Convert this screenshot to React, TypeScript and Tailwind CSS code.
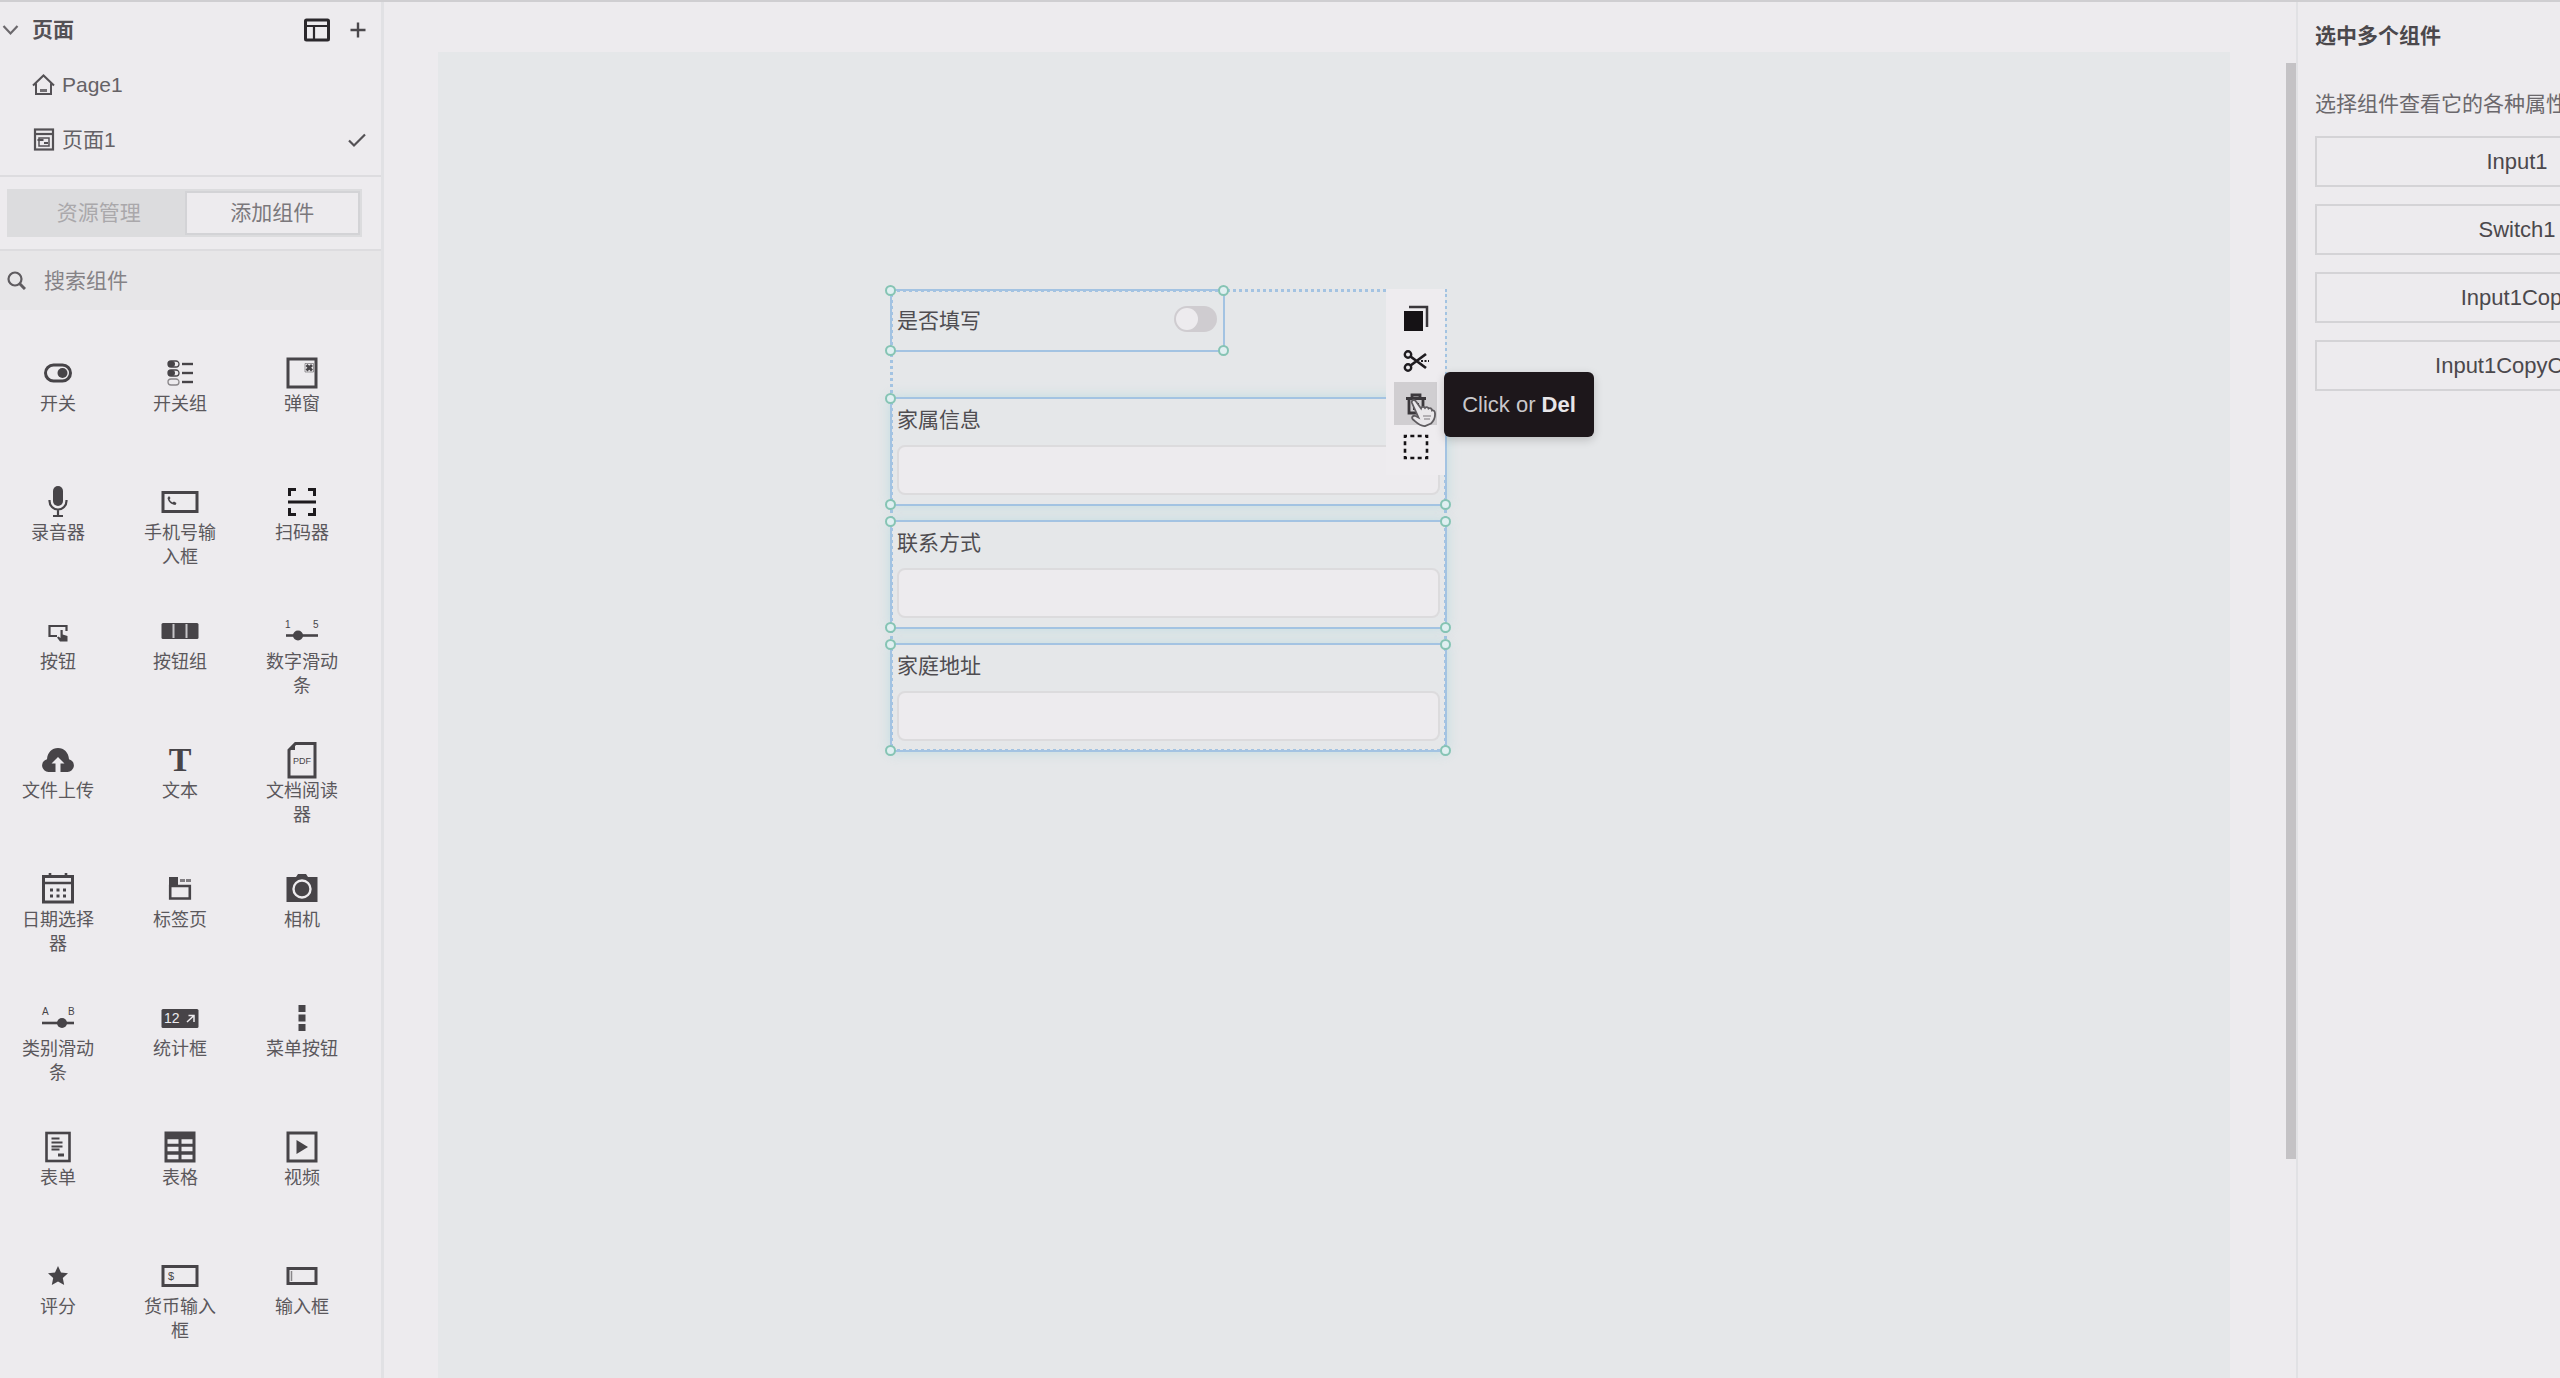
import React from 'react';

const Svg = ({ children }: { children: React.ReactNode }) => (
  <svg
    className="h-[38px] w-10 shrink-0 overflow-visible"
    viewBox="-20 -19 40 38"
    fill="none"
    stroke="#474448"
    strokeWidth="3"
    aria-hidden="true"
  >
    {children}
  </svg>
);

const ink = '#474448';
const light = '#edebee';
const font = 'Liberation Sans, sans-serif';

const icons: Record<string, React.ReactNode> = {
  switch: (
    <Svg>
      <rect x="-12.5" y="-8" width="25" height="16" rx="8" />
      <circle cx="4.5" cy="0" r="5" fill={ink} stroke="none" />
    </Svg>
  ),
  switchGroup: (
    <Svg>
      {[-9, 0, 9].map((y) => (
        <g key={y}>
          <rect x="-12" y={y - 3} width="11" height="6" rx="3" strokeWidth="1.3" opacity={y === 9 ? 0.6 : 1} />
          {y < 9 && <rect x="-12" y={y - 3} width="7" height="6" rx="3" fill={ink} stroke="none" />}
          <path d={`M2 ${y}h11`} strokeWidth="2.4" />
        </g>
      ))}
    </Svg>
  ),
  modal: (
    <Svg>
      <rect x="-14" y="-14" width="28" height="28" />
      <path d="M3 -9.500h8.500v8.500H3z" strokeWidth="1" opacity=".5" />
      <path d="M4.500 -8l5.500 5.500M10 -8l-5.500 5.500" strokeWidth="2.800" />
    </Svg>
  ),
  mic: (
    <Svg>
      <rect x="-5" y="-16" width="10" height="20" rx="5" fill={ink} stroke="none" />
      <path d="M-8.500 -2v1a8.500 8.500 0 0 0 17 0v-1M0 8v6M-5 14h10" strokeWidth="2.200" />
    </Svg>
  ),
  phone: (
    <Svg>
      <rect x="-17" y="-9.500" width="34" height="19" />
      <path d="M-12.500 -4c1 4.500 4 6.500 8 7l1-2-2.500-1.500-1.500 1c-1.500-.8-2.300-1.800-3-3l1-1.500-1.500-2z" fill={ink} stroke="none" />
    </Svg>
  ),
  scan: (
    <Svg>
      <path d="M-12.500 -6v-6.500h6.500M6 -12.500h6.500v6.500M12.500 6v6.500H6M-6 12.500h-6.500V6M-14 0h28" stroke="#1d1a1d" strokeWidth="3" />
    </Svg>
  ),
  button: (
    <Svg>
      <path d="M-1 5h-7.500v-10h17V0" strokeWidth="2.200" />
      <path d="M2 10.500l-3-4 1.500-1 2 1.500V-1h2.200v4.500l4.800 1.500v5.500z" fill={ink} stroke="none" />
    </Svg>
  ),
  buttonGroup: (
    <Svg>
      <rect x="-18.500" y="-8" width="37" height="16" rx="1.500" fill={ink} stroke="none" />
      <path d="M-6.500 -7v14M6.500 -7v14" stroke="#c6c4c7" strokeWidth="2" />
    </Svg>
  ),
  numberSlider: (
    <Svg>
      <path d="M-16 4.500h32" strokeWidth="2.600" />
      <circle cx="-4" cy="4.500" r="5" fill={ink} stroke="none" />
      <text x="-17" y="-3" fontSize="10" fill={ink} stroke="none" fontFamily={font}>1</text>
      <text x="11" y="-3" fontSize="10" fill={ink} stroke="none" fontFamily={font}>5</text>
    </Svg>
  ),
  upload: (
    <Svg>
      <path
        d="M-2.500 12H-9.500a6.500 6.500 0 0 1-1.500-12.800C-10.500 -7.500-6 -12 0 -12s10.500 4.500 11 11.200A6.500 6.500 0 0 1 9.500 12H2.500V3.500h4L0 -3l-6.500 6.500h4z"
        fill={ink}
        stroke="none"
      />
    </Svg>
  ),
  text: (
    <Svg>
      <text x="0" y="11" fontSize="34" fontWeight="700" textAnchor="middle" fill={ink} stroke="none" fontFamily="Liberation Serif, serif">
        T
      </text>
    </Svg>
  ),
  pdf: (
    <Svg>
      <path d="M-13 17v-27l6.500-6.500H13V17z" />
      <path d="M-13 -10h6v-6z" fill={ink} stroke="none" />
      <text x="0" y="4" fontSize="9" textAnchor="middle" fill={ink} stroke="none" fontFamily={font}>PDF</text>
    </Svg>
  ),
  calendar: (
    <Svg>
      <rect x="-14.500" y="-12.500" width="29" height="25.500" />
      <path d="M-14 -6h28M-8 -16v5M8 -16v5" strokeWidth="2.600" />
      <path d="M-8 1h16M-8 7h16" strokeWidth="3" strokeDasharray="3 3.500" />
    </Svg>
  ),
  tabs: (
    <Svg>
      <path d="M-9.800 -3h19.600v12.500h-19.600z" strokeWidth="2.600" />
      <path d="M-11 -12h9v8h-9z" fill={ink} stroke="none" />
      <path d="M0 -8.500h11" strokeWidth="3" opacity=".65" strokeDasharray="5 1" />
    </Svg>
  ),
  camera: (
    <Svg>
      <path d="M-15.500 -12h9.500l2-3h8l2 3h9.500v25h-31z" fill={ink} stroke="none" />
      <circle cx="0" cy="0" r="8.500" stroke={light} strokeWidth="2.400" />
    </Svg>
  ),
  categorySlider: (
    <Svg>
      <path d="M-16 5h32" strokeWidth="2.600" />
      <circle cx="4" cy="5" r="5" fill={ink} stroke="none" />
      <text x="-16" y="-3" fontSize="10" fill={ink} stroke="none" fontFamily={font}>A</text>
      <text x="10" y="-3" fontSize="10" fill={ink} stroke="none" fontFamily={font}>B</text>
    </Svg>
  ),
  stat: (
    <Svg>
      <rect x="-18.500" y="-9" width="37" height="19" rx="1.500" fill={ink} stroke="none" />
      <text x="-16" y="5" fontSize="14" fill={light} stroke="none" fontFamily={font}>12</text>
      <path d="M7 4l6.500-6M8.500 -2.500h5.500V4" stroke={light} strokeWidth="1.500" />
    </Svg>
  ),
  menu: (
    <Svg>
      <path d="M-3.500 -13h7v7h-7zM-3.500 -3.500h7v7h-7zM-3.500 6h7v7h-7z" fill={ink} stroke="none" />
    </Svg>
  ),
  form: (
    <Svg>
      <rect x="-11.500" y="-14" width="23" height="28" strokeWidth="2.600" />
      <path d="M-6.500 -8.500h8M-6.500 -4.500h11M-6.500 -.5h11M-6.500 2.500h8" strokeWidth="2" />
      <path d="M0 8h6" strokeWidth="3" />
    </Svg>
  ),
  table: (
    <Svg>
      <rect x="-15.500" y="-15.500" width="31" height="31" fill={ink} stroke="none" />
      <path d="M-12.500 -5.500h11M1.500 -5.500h11M-12.500 2h11M1.500 2h11M-12.500 10h11M1.500 10h11" stroke={light} strokeWidth="4.500" />
    </Svg>
  ),
  video: (
    <Svg>
      <rect x="-14" y="-14" width="28" height="28" />
      <path d="M-5.500 -7L6 0-5.500 7z" fill={ink} stroke="none" />
    </Svg>
  ),
  star: (
    <Svg>
      <path d="M0 -10l3 6.500 7 .8-5.200 4.800L6.200 9 0 5.500-6.200 9l1.400-6.900L-10 -2.700l7-.8z" fill={ink} stroke="none" />
    </Svg>
  ),
  currency: (
    <Svg>
      <rect x="-17" y="-9.500" width="34" height="19" />
      <text x="-12" y="4" fontSize="11" fill={ink} stroke="none" fontFamily={font}>$</text>
    </Svg>
  ),
  input: (
    <Svg>
      <rect x="-14" y="-7.500" width="28" height="15" />
      <path d="M-10.500 -5v10" strokeWidth="1.500" opacity=".6" />
    </Svg>
  ),
};

const components: [string, string][] = [
  ['switch', '开关'],
  ['switchGroup', '开关组'],
  ['modal', '弹窗'],
  ['mic', '录音器'],
  ['phone', '手机号输入框'],
  ['scan', '扫码器'],
  ['button', '按钮'],
  ['buttonGroup', '按钮组'],
  ['numberSlider', '数字滑动条'],
  ['upload', '文件上传'],
  ['text', '文本'],
  ['pdf', '文档阅读器'],
  ['calendar', '日期选择器'],
  ['tabs', '标签页'],
  ['camera', '相机'],
  ['categorySlider', '类别滑动条'],
  ['stat', '统计框'],
  ['menu', '菜单按钮'],
  ['form', '表单'],
  ['table', '表格'],
  ['video', '视频'],
  ['star', '评分'],
  ['currency', '货币输入框'],
  ['input', '输入框'],
];

function Sidebar() {
  return (
    <aside className="flex w-[384px] shrink-0 flex-col overflow-hidden border-r-3 border-[#e1e1e4]">
      <section className="flex flex-col border-b-2 border-[#dddcdf] pb-2">
        <div className="flex h-[55px] items-center pr-[15px]">
          <button className="flex items-center gap-[13px] font-bold text-[#545155]">
            <svg className="ml-[2px] h-4 w-[17px]" viewBox="0 0 17 16" fill="none" stroke="#6b686c" strokeWidth="2.2" aria-hidden="true">
              <path d="M1.500 4l7 7.500 7-7.500" />
            </svg>
            页面
          </button>
          <button aria-label="布局" className="ml-auto">
            <svg className="h-6 w-[26px]" viewBox="0 0 26 24" fill="none" stroke="#2b282c" strokeWidth="3" aria-hidden="true">
              <rect x="1.500" y="2" width="23" height="20" rx="1" />
              <path d="M2 8h22M10 8v14" strokeWidth="2.200" />
            </svg>
          </button>
          <button aria-label="新增页面" className="ml-[20px]">
            <svg className="h-4 w-4" viewBox="0 0 16 16" fill="none" stroke="#4b484c" strokeWidth="2.400" aria-hidden="true">
              <path d="M8 .5v15M.5 8h15" />
            </svg>
          </button>
        </div>
        <button className="flex h-[55px] items-center gap-[7px] pl-8">
          <svg className="h-[23px] w-[23px]" viewBox="0 0 23 23" fill="none" stroke="#545155" strokeWidth="2" aria-hidden="true">
            <path d="M1 12.500L11.500 2.500 22 12.500M4 10.500V21h15V10.500" />
            <path d="M8 17.500h7" strokeWidth="3" opacity=".8" />
          </svg>
          Page1
        </button>
        <button className="flex h-[55px] items-center gap-[7px] pr-[15px] pl-8">
          <svg className="h-[23px] w-[23px]" viewBox="0 0 23 23" fill="none" stroke="#545155" strokeWidth="2.200" aria-hidden="true">
            <rect x="3" y="1.500" width="18" height="20" />
            <path d="M3 6h18" />
            <rect x="7" y="10" width="10" height="8" strokeWidth="1.500" />
            <path d="M5.500 12h6M12 15h4" strokeWidth="2" />
          </svg>
          页面1
          <svg className="ml-auto h-4 w-[18px]" viewBox="0 0 18 16" fill="none" stroke="#545155" strokeWidth="2.200" aria-hidden="true">
            <path d="M1 8.500l5 5L17 2.500" />
          </svg>
        </button>
      </section>
      <div className="border-b-2 border-[#dddcdf] px-[7px] py-3">
        <div className="mr-3 flex h-12 bg-[#dcdcde] p-[2px]">
          <button className="flex-1 pl-1 text-[#aaa8ab]">资源管理</button>
          <button className="flex-1 border-2 border-[#d3d3d6] bg-[#edebee] text-[#7b787c]">添加组件</button>
        </div>
      </div>
      <label className="flex h-[59px] shrink-0 items-center gap-[18px] bg-[#e7e6e8] pl-[7px]">
        <svg className="h-[19px] w-[19px] shrink-0" viewBox="0 0 19 19" fill="none" stroke="#5f5c60" strokeWidth="2.200" aria-hidden="true">
          <circle cx="8" cy="8" r="6.500" />
          <path d="M12.500 12.500l5.500 5.500" strokeWidth="3" />
        </svg>
        <input type="search" aria-label="搜索组件" placeholder="搜索组件" className="w-full min-w-0 bg-transparent outline-none placeholder:text-[#858286]" />
      </label>
      <div className="mt-[44px] mr-[18px] -ml-[3px] grid auto-rows-[129px] grid-cols-3 text-lg leading-6 text-[#5b585c]">
        {components.map(([icon, label]) => (
          <button key={icon} className="flex flex-col items-center">
            {icons[icon]}
            <span className="w-[74px]">{label}</span>
          </button>
        ))}
      </div>
    </aside>
  );
}

function Selection({ children, className = '' }: { children: React.ReactNode; className?: string }) {
  const handle = 'absolute size-[11px] rounded-full border-2 border-[#86c4b4] bg-[#e0eff1]';
  return (
    <div className={'relative border-2 border-[#a3c3e2] ' + className}>
      {children}
      <i className={handle + ' -top-[6px] -left-[7px]'} />
      <i className={handle + ' -top-[6px] -right-[6px]'} />
      <i className={handle + ' -bottom-[6px] -left-[7px]'} />
      <i className={handle + ' -right-[6px] -bottom-[6px]'} />
    </div>
  );
}

function Field({ id, label }: { id: string; label: string }) {
  return (
    <Selection className="flex h-[109px] flex-col px-[5px] pt-[5px] shadow-[0_0_12px_rgba(150,208,216,0.45)]">
      <label htmlFor={id} className="leading-8">{label}</label>
      <input id={id} className="mt-[9px] h-[50px] w-full rounded-lg border-2 border-[#dcdbdd] bg-[#edebee] px-3 outline-none" />
    </Selection>
  );
}

function Toolbar() {
  const item = 'flex h-[43px] w-[43px] items-center justify-center';
  return (
    <div className="absolute top-0 right-[2px] z-10 flex w-[59px] flex-col items-center bg-[#eeecef] py-[7px]">
      <button aria-label="复制" className={item}>
        <svg className="h-[26px] w-[26px]" viewBox="0 0 26 26" aria-hidden="true">
          <path d="M1 6h19v20H1z" fill="#151215" />
          <path d="M6 2h18v20" fill="none" stroke="#3a373b" strokeWidth="2.500" />
        </svg>
      </button>
      <button aria-label="剪切" className={item}>
        <svg className="h-[22px] w-[26px]" viewBox="0 0 26 22" fill="none" stroke="#1f1c20" strokeWidth="2.400" aria-hidden="true">
          <circle cx="5" cy="4.500" r="3.200" />
          <circle cx="5" cy="17.500" r="3.200" />
          <path d="M7.500 6.500L23 18M7.500 15.500L23 4" strokeWidth="2.800" />
          <path d="M18 11h8" strokeWidth="1.800" strokeDasharray="2 1.500" />
        </svg>
      </button>
      <button aria-label="删除" className={item + ' relative bg-[#d0ced1]'}>
        <svg className="h-[22px] w-[22px]" viewBox="0 0 22 22" fill="none" stroke="#3b383c" strokeWidth="2.800" aria-hidden="true">
          <path d="M1 5.500h20M7 5V2h8v3M4 6v14h14V6" />
          <path d="M9 10v7M13 10v7" strokeWidth="2" />
        </svg>
        <svg className="absolute top-[17px] left-[16px] h-[28px] w-[27px]" viewBox="0 0 27 28" aria-hidden="true">
          <path
            d="M2 4c-1-3 2.500-4 4-1.500l5 7c.5-2 3-2 4-.5 1-1.500 3-1 3.500.5 1.500-1 3.500 0 3.500 2 1.500-.5 3 .5 3 3 .3 4-1 7-4 10l-6 2.500c-5 .5-8-3-12-6.500-2-2 0-4.500 2.500-3.500l3 1.500z"
            fill="#e9e7ea"
            stroke="#5f5c60"
            strokeWidth="1.800"
          />
          <path d="M13 17h8M14 20h6" stroke="#a19ea2" strokeWidth="1.500" />
        </svg>
      </button>
      <button aria-label="全选" className={item}>
        <svg className="h-[26px] w-[26px]" viewBox="0 0 26 26" fill="none" stroke="#151215" strokeWidth="2.600" strokeDasharray="4 3.333" strokeDashoffset="2" aria-hidden="true">
          <path d="M2 2h22v22H2z" />
        </svg>
      </button>
      <div role="tooltip" className="absolute top-[83px] left-[58px] flex h-[65px] w-[150px] items-center justify-center rounded-md bg-[#1d171b] text-[22px] whitespace-pre text-[#c9c7ca] shadow-[0_3px_10px_rgba(0,0,0,0.18)]">
        Click or <b className="text-[#e8e6e9]">Del</b>
      </div>
    </div>
  );
}

function Artboard() {
  return (
    <main className="flex min-w-0 flex-1 pl-[54px]">
      <div className="relative mt-[50px] flex-1 bg-[#e5e7e9] text-[#4f4d51]">
        <div className="absolute top-[237px] left-[452px] w-[557px]">
          <div className="pointer-events-none absolute inset-0 border-3 border-dotted border-[#a3c3e2]" />
          <div className="flex flex-col gap-[14px]">
            <Selection className="mb-[31px] flex h-[63px] w-[335px] items-center px-[5px]">
              <label htmlFor="fill-switch">是否填写</label>
              <span className="relative mr-px mb-1 ml-auto h-[26px] w-[43px]">
                <input
                  id="fill-switch"
                  type="checkbox"
                  role="switch"
                  className="peer block h-full w-full appearance-none rounded-full bg-[#cfccd0] checked:bg-[#86c4b4]"
                />
                <i className="pointer-events-none absolute top-[2px] left-[2px] size-[22px] rounded-full bg-[#edebee] peer-checked:left-[19px]" />
              </span>
            </Selection>
            <Field id="family" label="家属信息" />
            <Field id="contact" label="联系方式" />
            <Field id="address" label="家庭地址" />
          </div>
          <Toolbar />
        </div>
      </div>
      <div className="mt-[61px] ml-[56px] h-[1096px] w-[10px] shrink-0 bg-[#c4c2c5]" />
    </main>
  );
}

function Inspector() {
  return (
    <aside className="w-[264px] shrink-0 overflow-hidden border-l-2 border-[#e1e1e4] pl-[17px]">
      <div className="flex w-[404px] flex-col pt-[18px]">
        <h2 className="leading-8 font-bold text-[#4b484c]">选中多个组件</h2>
        <p className="mt-9 leading-8 text-[#6b686c]">选择组件查看它的各种属性</p>
        <div className="mt-4 flex flex-col gap-[17px] text-[22px] text-[#4b484c]">
          {['Input1', 'Switch1', 'Input1Copy', 'Input1CopyCopy'].map((name) => (
            <button key={name} className="h-[51px] border-2 border-[#d4d3d6]">
              {name}
            </button>
          ))}
        </div>
      </div>
    </aside>
  );
}

export default function App() {
  return (
    <div className="flex h-screen overflow-hidden border-t-2 border-[#cfced1] bg-[#edebee] font-['Liberation_Sans','Noto_Sans_CJK_SC',sans-serif] text-[21px] leading-8 text-[#656266]">
      <Sidebar />
      <Artboard />
      <Inspector />
    </div>
  );
}
